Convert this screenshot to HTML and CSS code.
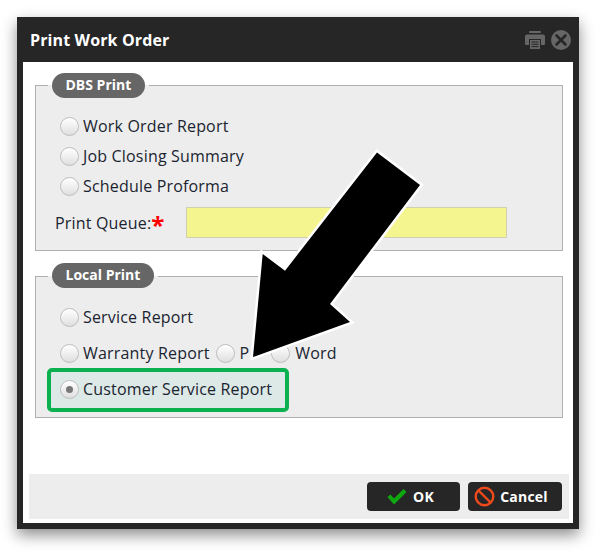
FILE: index.html
```html
<!DOCTYPE html>
<html lang="en">
<head>
    <meta charset="UTF-8">
    <meta name="viewport" content="width=device-width, initial-scale=1.0">
    <title>Print Work Order</title>
    <link rel="stylesheet" href="styles.css">
</head>
<body>
    <div class="dialog">
        <div class="titlebar">
            <h1 class="title">Print Work Order</h1>
            <svg class="print-icon" width="20" height="18" viewBox="0 0 20 18">
                <rect x="4" y="0" width="12" height="2" rx="1" fill="#666"/>
                <path d="M2 3.500h16a2 2 0 0 1 2 2V13a1 1 0 0 1-1 1h-3V8H4v6H1a1 1 0 0 1-1-1V5.500a2 2 0 0 1 2-2z" fill="#666"/>
                <path d="M5 9h10v9H5z" fill="#666"/>
                <path d="M6.500 11h7M6.500 13.300h7M6.500 15.600h7" stroke="#262626" stroke-width="1"/>
            </svg>
            <svg class="close-icon" width="20" height="20" viewBox="0 0 20 20">
                <circle cx="10" cy="10" r="10" fill="#666"/>
                <path d="M5.500 5.500l9 9M14.500 5.500l-9 9" stroke="#262626" stroke-width="2.600" stroke-linecap="round"/>
            </svg>
        </div>

        <div class="content">
            <fieldset class="group group-dbs">
                <legend class="group-legend"><span class="pill">DBS Print</span></legend>
                <label class="row"><input type="radio" name="dbs"> Work Order Report</label>
                <label class="row"><input type="radio" name="dbs"> Job Closing Summary</label>
                <label class="row"><input type="radio" name="dbs"> Schedule Proforma</label>
                <div class="queue">
                    <span class="queue-label">Print Queue:<span class="required">*</span></span>
                    <input class="queue-input" type="text">
                </div>
            </fieldset>

            <fieldset class="group group-local">
                <legend class="group-legend"><span class="pill">Local Print</span></legend>
                <label class="row"><input type="radio" name="local"> Service Report</label>
                <div class="row row-multi">
                    <label class="opt"><input type="radio" name="local"> Warranty Report</label>
                    <label class="opt"><input type="radio" name="local"> P</label>
                    <label class="opt opt-word"><input type="radio" name="local"> Word</label>
                </div>
                <label class="row row-picked"><input type="radio" name="local" checked> Customer Service Report</label>
            </fieldset>

            <div class="footer">
                <button class="btn btn-ok" type="button">
                    <svg width="20" height="16" viewBox="0 0 20 16"><path d="M0.500 8l6.500 7.500L19.500 3l-3-3L7 9.500 3.500 5.500z" fill="#0fa80f"/></svg>
                    OK
                </button>
                <button class="btn btn-cancel" type="button">
                    <svg width="21" height="21" viewBox="0 0 21 21"><circle cx="10.500" cy="10.500" r="8.800" fill="none" stroke="#f04a1c" stroke-width="2.400"/><path d="M4.500 4.500l12 12" stroke="#f04a1c" stroke-width="2.400"/></svg>
                    Cancel
                </button>
            </div>
        </div>
    </div>

    <!-- arrow drawn on top of the screenshot -->
    <svg class="arrow" width="605" height="555" viewBox="0 0 605 555">
        <polygon class="arrow-shape" points="377,152.500 420,185 330,304 350,322 253,357 262.700,254 285,270.700"/>
    </svg>
</body>
</html>
```

FILE: styles.css
```css
*{margin: 0; padding: 0; box-sizing: border-box;}
body{background-color: #fff; font-family: "Open Sans", "Noto Sans", sans-serif; font-size: 16px; letter-spacing: 0.18px; color: #1a2430; width: 605px; height: 555px; overflow: hidden; position: relative;}

.dialog{width: 562px; height: 512px; margin: 17px 0 0 17px; background-color: #262626; padding: 0 6px 6px; display: flex; flex-direction: column; box-shadow: 0 6px 14px rgba(0, 0, 0, 0.45);}
.titlebar{height: 45px; flex: none; display: flex; align-items: center; color: #fff; padding: 0 2px 0 7px;}
.title{font-size: 16px; font-weight: 700; flex: 1; letter-spacing: 0.13px;}
.print-icon{margin-right: 6px;}

.content{flex: 1; background-color: #fff; padding: 11px 10px 4px 12px; display: flex; flex-direction: column;}

.group{border: 1px solid #b0b0b0; background-color: #ededed; display: block; min-width: 0;}
.group-dbs{height: 178px; padding-top: 13px;}
.group-local{height: 155px; margin-top: 12px; padding-top: 13px;}
.group-legend{margin-left: 12px; padding: 0 4px; height: 25px;}
.group-local .group-legend{height: 26px;}
.pill{display: block; height: 25px; line-height: 24px; padding: 0 13.500px; border-radius: 13px; background-color: #666; color: #fff; font-size: 14px; font-weight: 700; letter-spacing: 0;}

.row{display: flex; align-items: center; height: 30px; padding-left: 24px; gap: 4px;}
.row-multi{margin-top: 6px; gap: 6px;}
.opt{display: flex; align-items: center; gap: 4px;}
.opt + .opt{gap: 5px;}
.opt-word{margin-left: 16px;}
.row-picked{width: 242px; height: 44px; margin-left: 11px; padding: 0 0 2px 9px; border: 4px solid #0bb04f; border-radius: 5px; background-color: #dde9e6;}

input[type="radio"]{appearance: none; width: 19px; height: 19px; flex: none; border-radius: 50%; border: 1px solid #bdbdbd; background: linear-gradient(#fff, #dfdfdf); box-shadow: inset 0 1px 1px #fff; display: grid; place-content: center;}
input[type="radio"]:checked::before{content: ""; width: 7px; height: 7px; border-radius: 50%; background-color: #777;}

.queue{display: flex; align-items: center; height: 31px; margin-top: 6px; padding-left: 19px;}
.queue-label{width: 131px;}
.required{color: #f00; font-weight: 700; font-size: 24px; line-height: 16px; vertical-align: -5px;}
.queue-input{width: 321px; height: 31px; background-color: #f5f58f; border: 1px solid #d0d0b0;}

.footer{margin: auto -6px 0 -6px; height: 45px; flex: none; background-color: #ededed; display: flex; justify-content: flex-end; align-items: center; gap: 8px; padding-right: 7px;}
.btn{height: 29px; display: flex; align-items: center; justify-content: center; background-color: #262626; color: #fff; border: none; border-radius: 4px; font-family: inherit; font-size: 14px; font-weight: 700; letter-spacing: 0.2px;}
.btn-ok{width: 93px; gap: 6px; padding-right: 6px;}
.btn-cancel{width: 94px; gap: 5px; padding-right: 8px;}

.arrow{position: absolute; left: 0; top: 0;}
.arrow-shape{fill: #000; stroke: #fff; stroke-width: 5px; paint-order: stroke;}
```
